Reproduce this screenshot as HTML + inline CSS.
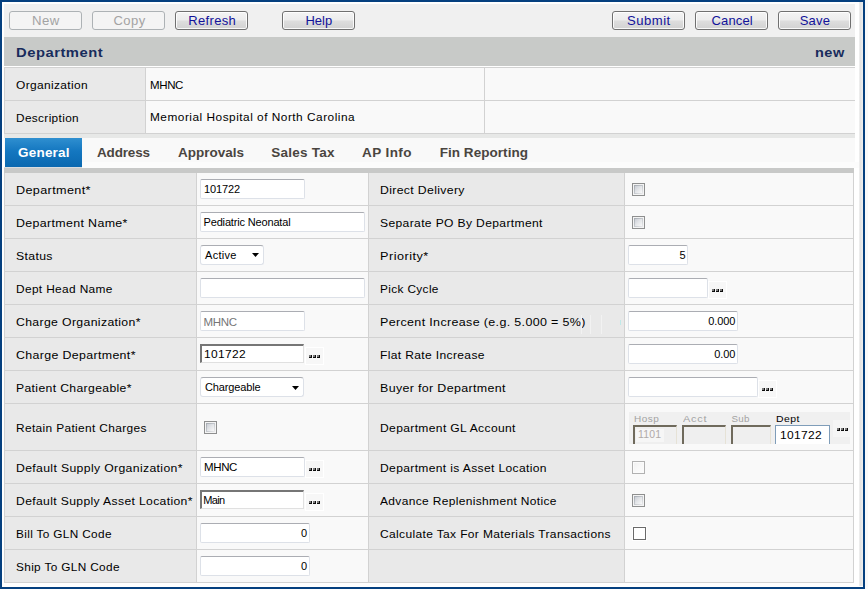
<!DOCTYPE html>
<html><head><meta charset="utf-8"><title>Department</title><style>
html,body{margin:0;padding:0;}
body{width:868px;height:589px;background:#fafafa;position:relative;overflow:hidden;font-family:"Liberation Sans",sans-serif;}
div,span,svg{position:absolute;box-sizing:border-box;}
.t{white-space:pre;}
#frame{left:0;top:0;width:865px;height:589px;border:2px solid #05407f;background:#fff;}
.btn{border:1px solid #707070;border-radius:3px;background:linear-gradient(180deg,#f4f4f4 0%,#ececec 48%,#dedede 52%,#d2d2d2 100%);box-shadow:inset 0 0 0 1px rgba(255,255,255,.85);}
.btn.dis{border-color:#adb2b5;background:#f4f4f4;box-shadow:none;}
.in7{background:#fff;border:1px solid #dde1e8;border-top-color:#abadb3;border-radius:2px;}
.sel{background:#fff;border:1px solid #dde1e8;border-top-color:#abadb3;border-radius:3px;}
.inset{background:#fff;border:1px solid #e0e0e0;border-top:2px solid #767676;border-left:2px solid #767676;}
.gin{background:#efefef;border-top:2px solid #6f6a5c;border-left:2px solid #6f6a5c;border-right:1px solid #e6e2d6;}
.gdept{background:#fff;border:1px solid #7f9db9;border-bottom:none;}
.cb{width:13px;height:13px;border:1px solid #8e8f8f;background:#f4f4f4;}
.cbn::before{content:"";position:absolute;left:1px;top:1px;width:9px;height:9px;background:linear-gradient(135deg,#a4a9b0 0%,#c4c8cd 50%,#ececee 100%);}
.cbn::after{content:"";position:absolute;left:2px;top:2px;width:7px;height:7px;background:linear-gradient(135deg,#cbcfd6 0%,#e4e6e9 50%,#f8f8f8 100%);}
.cbd{border-color:#b1b1b1;background:linear-gradient(135deg,#efefef 0%,#f8f8f8 50%,#fcfcfc 100%);box-shadow:inset 0 0 0 1px #fbfbfb;}
.cbp{border:1px solid #6a6a6a;background:#fff;box-shadow:0 0 0 1px rgba(255,255,255,.8);}
</style></head><body>
<div id="frame"></div>
<div class="" style="left:859px;top:2px;width:4px;height:584px;background:linear-gradient(90deg,#f2f2f2 0%,#e3e3e3 35%,#efefef 100%);"></div>
<div class="" style="left:4px;top:4px;width:851px;height:33px;background:#f0f0f0;"></div>
<div class="" style="left:4px;top:37px;width:851px;height:29px;background:#c8cac8;"></div>
<div class="btn dis" style="left:9px;top:11px;width:73px;height:19px;"></div>
<span class="t" style="left:32.00px;top:14.00px;font-size:13px;line-height:13px;letter-spacing:0.495px;color:#a3a3a3;transform:scaleX(1.014);transform-origin:0 0;">New</span>
<div class="btn dis" style="left:92px;top:11px;width:73px;height:19px;"></div>
<span class="t" style="left:113.40px;top:14.00px;font-size:13px;line-height:13px;letter-spacing:0.470px;color:#a3a3a3;">Copy</span>
<div class="btn" style="left:175px;top:11px;width:73px;height:19px;"></div>
<span class="t" style="left:188.30px;top:14.00px;font-size:13px;line-height:13px;letter-spacing:0.333px;color:#12129a;">Refresh</span>
<div class="btn" style="left:282px;top:11px;width:73px;height:19px;"></div>
<span class="t" style="left:305.40px;top:14.00px;font-size:13px;line-height:13px;letter-spacing:0.040px;color:#12129a;">Help</span>
<div class="btn" style="left:612px;top:11px;width:73px;height:19px;"></div>
<span class="t" style="left:627.20px;top:14.00px;font-size:13px;line-height:13px;letter-spacing:0.494px;color:#12129a;transform:scaleX(1.007);transform-origin:0 0;">Submit</span>
<div class="btn" style="left:695px;top:11px;width:73px;height:19px;"></div>
<span class="t" style="left:711.50px;top:14.00px;font-size:13px;line-height:13px;letter-spacing:0.154px;color:#12129a;">Cancel</span>
<div class="btn" style="left:778px;top:11px;width:73px;height:19px;"></div>
<span class="t" style="left:799.70px;top:14.00px;font-size:13px;line-height:13px;letter-spacing:0.220px;color:#12129a;">Save</span>
<span class="t" style="left:16.30px;top:46.07px;font-size:13.5px;line-height:13.5px;letter-spacing:0.458px;color:#182c5c;font-weight:bold;transform:scaleX(1.095);transform-origin:0 0;">Department</span>
<span class="t" style="left:814.60px;top:46.07px;font-size:13.5px;line-height:13.5px;letter-spacing:0.465px;color:#182c5c;font-weight:bold;transform:scaleX(1.075);transform-origin:0 0;">new</span>
<div class="" style="left:4px;top:67px;width:851px;height:67px;background:#d2d2d2;"></div>
<div class="" style="left:5px;top:68px;width:140px;height:32px;background:#e9e9e9;"></div>
<div class="" style="left:146px;top:68px;width:338px;height:32px;background:#f9f9f9;"></div>
<div class="" style="left:485px;top:68px;width:370px;height:32px;background:#f9f9f9;"></div>
<span class="t" style="left:16px;top:80.47px;font-size:11.5px;line-height:11.5px;letter-spacing:0.336px;color:#000;transform:scaleX(1.04);transform-origin:0 0;">Organization</span>
<span class="t" style="left:150px;top:80.47px;font-size:11.5px;line-height:11.5px;letter-spacing:-0.374px;color:#000;">MHNC</span>
<div class="" style="left:5px;top:101px;width:140px;height:32px;background:#e9e9e9;"></div>
<div class="" style="left:146px;top:101px;width:338px;height:32px;background:#f9f9f9;"></div>
<div class="" style="left:485px;top:101px;width:370px;height:32px;background:#f9f9f9;"></div>
<span class="t" style="left:16px;top:113.47px;font-size:11.5px;line-height:11.5px;letter-spacing:0.342px;color:#000;transform:scaleX(1.028);transform-origin:0 0;">Description</span>
<span class="t" style="left:149.90px;top:112.47px;font-size:11.5px;line-height:11.5px;letter-spacing:0.485px;color:#000;transform:scaleX(1.03);transform-origin:0 0;">Memorial Hospital of North Carolina</span>
<div class="" style="left:4px;top:134px;width:851px;height:4px;background:#e7e8e7;"></div>
<div class="" style="left:4px;top:138px;width:851px;height:24px;background:#f9f9f9;"></div>
<div class="" style="left:4px;top:162px;width:855px;height:6px;background:#fcfcfc;"></div>
<div class="" style="left:5px;top:138px;width:77px;height:29px;background:linear-gradient(180deg,#2f8fd0 0%,#1477c0 45%,#0a68b0 100%);"></div>
<span class="t" style="left:18.00px;top:145.57px;font-size:13.5px;line-height:13.5px;letter-spacing:0.213px;color:#fff;font-weight:bold;">General</span>
<span class="t" style="left:97.00px;top:145.57px;font-size:13.5px;line-height:13.5px;letter-spacing:-0.167px;color:#4a4540;font-weight:bold;">Address</span>
<span class="t" style="left:178.00px;top:145.57px;font-size:13.5px;line-height:13.5px;letter-spacing:-0.002px;color:#4a4540;font-weight:bold;">Approvals</span>
<span class="t" style="left:271.30px;top:145.57px;font-size:13.5px;line-height:13.5px;letter-spacing:0.239px;color:#4a4540;font-weight:bold;">Sales Tax</span>
<span class="t" style="left:362.00px;top:145.57px;font-size:13.5px;line-height:13.5px;letter-spacing:0.420px;color:#4a4540;font-weight:bold;">AP Info</span>
<span class="t" style="left:439.70px;top:145.57px;font-size:13.5px;line-height:13.5px;letter-spacing:0.046px;color:#4a4540;font-weight:bold;">Fin Reporting</span>
<div class="" style="left:4px;top:167px;width:78px;height:1px;background:#d9dde0;"></div>
<div class="" style="left:4px;top:168px;width:850px;height:415px;background:#d2d2d2;"></div>
<div class="" style="left:4px;top:168px;width:850px;height:5px;background:#c8c9c8;"></div>
<div class="" style="left:5px;top:173px;width:191px;height:32px;background:#e9e9e9;"></div>
<div class="" style="left:197px;top:173px;width:171px;height:32px;background:#f9f9f9;"></div>
<div class="" style="left:369px;top:173px;width:255px;height:32px;background:#e9e9e9;"></div>
<div class="" style="left:625px;top:173px;width:228px;height:32px;background:#f9f9f9;"></div>
<span class="t" style="left:16px;top:185.47px;font-size:11.5px;line-height:11.5px;letter-spacing:0.319px;color:#000;transform:scaleX(1.099);transform-origin:0 0;">Department*</span>
<span class="t" style="left:380px;top:185.47px;font-size:11.5px;line-height:11.5px;letter-spacing:0.329px;color:#000;transform:scaleX(1.064);transform-origin:0 0;">Direct Delivery</span>
<div class="" style="left:5px;top:206px;width:191px;height:32px;background:#e9e9e9;"></div>
<div class="" style="left:197px;top:206px;width:171px;height:32px;background:#f9f9f9;"></div>
<div class="" style="left:369px;top:206px;width:255px;height:32px;background:#e9e9e9;"></div>
<div class="" style="left:625px;top:206px;width:228px;height:32px;background:#f9f9f9;"></div>
<span class="t" style="left:16px;top:218.47px;font-size:11.5px;line-height:11.5px;letter-spacing:0.324px;color:#000;transform:scaleX(1.079);transform-origin:0 0;">Department Name*</span>
<span class="t" style="left:380px;top:218.47px;font-size:11.5px;line-height:11.5px;letter-spacing:0.335px;color:#000;transform:scaleX(1.052);transform-origin:0 0;">Separate PO By Department</span>
<div class="" style="left:5px;top:239px;width:191px;height:32px;background:#e9e9e9;"></div>
<div class="" style="left:197px;top:239px;width:171px;height:32px;background:#f9f9f9;"></div>
<div class="" style="left:369px;top:239px;width:255px;height:32px;background:#e9e9e9;"></div>
<div class="" style="left:625px;top:239px;width:228px;height:32px;background:#f9f9f9;"></div>
<span class="t" style="left:16px;top:251.47px;font-size:11.5px;line-height:11.5px;letter-spacing:0.331px;color:#000;transform:scaleX(1.064);transform-origin:0 0;">Status</span>
<span class="t" style="left:380px;top:251.47px;font-size:11.5px;line-height:11.5px;letter-spacing:0.456px;color:#000;transform:scaleX(1.1);transform-origin:0 0;">Priority*</span>
<div class="" style="left:5px;top:272px;width:191px;height:32px;background:#e9e9e9;"></div>
<div class="" style="left:197px;top:272px;width:171px;height:32px;background:#f9f9f9;"></div>
<div class="" style="left:369px;top:272px;width:255px;height:32px;background:#e9e9e9;"></div>
<div class="" style="left:625px;top:272px;width:228px;height:32px;background:#f9f9f9;"></div>
<span class="t" style="left:16px;top:284.47px;font-size:11.5px;line-height:11.5px;letter-spacing:0.341px;color:#000;transform:scaleX(1.034);transform-origin:0 0;">Dept Head Name</span>
<span class="t" style="left:380px;top:284.47px;font-size:11.5px;line-height:11.5px;letter-spacing:0.341px;color:#000;transform:scaleX(1.03);transform-origin:0 0;">Pick Cycle</span>
<div class="" style="left:5px;top:305px;width:191px;height:32px;background:#e9e9e9;"></div>
<div class="" style="left:197px;top:305px;width:171px;height:32px;background:#f9f9f9;"></div>
<div class="" style="left:369px;top:305px;width:255px;height:32px;background:#e9e9e9;"></div>
<div class="" style="left:625px;top:305px;width:228px;height:32px;background:#f9f9f9;"></div>
<span class="t" style="left:16px;top:317.47px;font-size:11.5px;line-height:11.5px;letter-spacing:0.330px;color:#000;transform:scaleX(1.065);transform-origin:0 0;">Charge Organization*</span>
<span class="t" style="left:380px;top:317.47px;font-size:11.5px;line-height:11.5px;letter-spacing:0.324px;color:#000;transform:scaleX(1.085);transform-origin:0 0;">Percent Increase (e.g. 5.000 = 5%)</span>
<div class="" style="left:5px;top:338px;width:191px;height:32px;background:#e9e9e9;"></div>
<div class="" style="left:197px;top:338px;width:171px;height:32px;background:#f9f9f9;"></div>
<div class="" style="left:369px;top:338px;width:255px;height:32px;background:#e9e9e9;"></div>
<div class="" style="left:625px;top:338px;width:228px;height:32px;background:#f9f9f9;"></div>
<span class="t" style="left:16px;top:350.47px;font-size:11.5px;line-height:11.5px;letter-spacing:0.326px;color:#000;transform:scaleX(1.076);transform-origin:0 0;">Charge Department*</span>
<span class="t" style="left:380px;top:350.47px;font-size:11.5px;line-height:11.5px;letter-spacing:0.336px;color:#000;transform:scaleX(1.048);transform-origin:0 0;">Flat Rate Increase</span>
<div class="" style="left:5px;top:371px;width:191px;height:32px;background:#e9e9e9;"></div>
<div class="" style="left:197px;top:371px;width:171px;height:32px;background:#f9f9f9;"></div>
<div class="" style="left:369px;top:371px;width:255px;height:32px;background:#e9e9e9;"></div>
<div class="" style="left:625px;top:371px;width:228px;height:32px;background:#f9f9f9;"></div>
<span class="t" style="left:16px;top:383.47px;font-size:11.5px;line-height:11.5px;letter-spacing:0.333px;color:#000;transform:scaleX(1.06);transform-origin:0 0;">Patient Chargeable*</span>
<span class="t" style="left:380px;top:383.47px;font-size:11.5px;line-height:11.5px;letter-spacing:0.322px;color:#000;transform:scaleX(1.081);transform-origin:0 0;">Buyer for Department</span>
<div class="" style="left:5px;top:404px;width:191px;height:46px;background:#e9e9e9;"></div>
<div class="" style="left:197px;top:404px;width:171px;height:46px;background:#f9f9f9;"></div>
<div class="" style="left:369px;top:404px;width:255px;height:46px;background:#e9e9e9;"></div>
<div class="" style="left:625px;top:404px;width:228px;height:46px;background:#f9f9f9;"></div>
<span class="t" style="left:16px;top:423.47px;font-size:11.5px;line-height:11.5px;letter-spacing:0.340px;color:#000;transform:scaleX(1.035);transform-origin:0 0;">Retain Patient Charges</span>
<span class="t" style="left:380px;top:423.47px;font-size:11.5px;line-height:11.5px;letter-spacing:0.335px;color:#000;transform:scaleX(1.05);transform-origin:0 0;">Department GL Account</span>
<div class="" style="left:5px;top:451px;width:191px;height:32px;background:#e9e9e9;"></div>
<div class="" style="left:197px;top:451px;width:171px;height:32px;background:#f9f9f9;"></div>
<div class="" style="left:369px;top:451px;width:255px;height:32px;background:#e9e9e9;"></div>
<div class="" style="left:625px;top:451px;width:228px;height:32px;background:#f9f9f9;"></div>
<span class="t" style="left:16px;top:463.47px;font-size:11.5px;line-height:11.5px;letter-spacing:0.330px;color:#000;transform:scaleX(1.063);transform-origin:0 0;">Default Supply Organization*</span>
<span class="t" style="left:380px;top:463.47px;font-size:11.5px;line-height:11.5px;letter-spacing:0.332px;color:#000;transform:scaleX(1.05);transform-origin:0 0;">Department is Asset Location</span>
<div class="" style="left:5px;top:484px;width:191px;height:32px;background:#e9e9e9;"></div>
<div class="" style="left:197px;top:484px;width:171px;height:32px;background:#f9f9f9;"></div>
<div class="" style="left:369px;top:484px;width:255px;height:32px;background:#e9e9e9;"></div>
<div class="" style="left:625px;top:484px;width:228px;height:32px;background:#f9f9f9;"></div>
<span class="t" style="left:16px;top:496.47px;font-size:11.5px;line-height:11.5px;letter-spacing:0.334px;color:#000;transform:scaleX(1.057);transform-origin:0 0;">Default Supply Asset Location*</span>
<span class="t" style="left:380px;top:496.47px;font-size:11.5px;line-height:11.5px;letter-spacing:0.336px;color:#000;transform:scaleX(1.041);transform-origin:0 0;">Advance Replenishment Notice</span>
<div class="" style="left:5px;top:517px;width:191px;height:32px;background:#e9e9e9;"></div>
<div class="" style="left:197px;top:517px;width:171px;height:32px;background:#f9f9f9;"></div>
<div class="" style="left:369px;top:517px;width:255px;height:32px;background:#e9e9e9;"></div>
<div class="" style="left:625px;top:517px;width:228px;height:32px;background:#f9f9f9;"></div>
<span class="t" style="left:16px;top:529.47px;font-size:11.5px;line-height:11.5px;letter-spacing:0.342px;color:#000;transform:scaleX(1.025);transform-origin:0 0;">Bill To GLN Code</span>
<span class="t" style="left:380px;top:529.47px;font-size:11.5px;line-height:11.5px;letter-spacing:0.334px;color:#000;transform:scaleX(1.045);transform-origin:0 0;">Calculate Tax For Materials Transactions</span>
<div class="" style="left:5px;top:550px;width:191px;height:32px;background:#e9e9e9;"></div>
<div class="" style="left:197px;top:550px;width:171px;height:32px;background:#f9f9f9;"></div>
<div class="" style="left:369px;top:550px;width:255px;height:32px;background:#e9e9e9;"></div>
<div class="" style="left:625px;top:550px;width:228px;height:32px;background:#f9f9f9;"></div>
<span class="t" style="left:16px;top:562.47px;font-size:11.5px;line-height:11.5px;letter-spacing:0.344px;color:#000;transform:scaleX(1.026);transform-origin:0 0;">Ship To GLN Code</span>
<div class="in7" style="left:200px;top:179px;width:105px;height:20px;"></div>
<span class="t" style="left:204px;top:183.69px;font-size:11px;line-height:11px;letter-spacing:-0.117px;color:#000;">101722</span>
<div class="in7" style="left:200px;top:212px;width:165px;height:20px;"></div>
<span class="t" style="left:203.5px;top:216.69px;font-size:11px;line-height:11px;letter-spacing:-0.160px;color:#000;">Pediatric Neonatal</span>
<div class="sel" style="left:200px;top:245px;width:64px;height:20px;"></div>
<span class="t" style="left:205px;top:249.69px;font-size:11px;line-height:11px;letter-spacing:0.300px;color:#000;">Active</span>
<svg class="t" style="left:252px;top:253px" width="7" height="4" viewBox="0 0 7 4"><path d="M0 0h7L3.5 4z" fill="#000"/></svg>
<div class="in7" style="left:200px;top:278px;width:165px;height:20px;"></div>
<div class="in7" style="left:200px;top:311px;width:105px;height:20px;"></div>
<span class="t" style="left:203.6px;top:317.47px;font-size:11.5px;line-height:11.5px;letter-spacing:-0.374px;color:#767676;">MHNC</span>
<div class="inset" style="left:200px;top:344px;width:104px;height:19px;"></div>
<span class="t" style="left:204px;top:349.47px;font-size:11.5px;line-height:11.5px;letter-spacing:0.336px;color:#000;transform:scaleX(1.04);transform-origin:0 0;">101722</span>
<div class="" style="left:305px;top:347px;width:19px;height:18px;background:#f7f7f7;border:1px solid #fff;"></div>
<div class="" style="left:309px;top:355px;width:3px;height:3px;background:#0c0c0c;"></div>
<div class="" style="left:309px;top:355px;width:2px;height:2px;background:#7a7a7a;"></div>
<div class="" style="left:313px;top:355px;width:3px;height:3px;background:#0c0c0c;"></div>
<div class="" style="left:313px;top:355px;width:2px;height:2px;background:#7a7a7a;"></div>
<div class="" style="left:317px;top:355px;width:3px;height:3px;background:#0c0c0c;"></div>
<div class="" style="left:317px;top:355px;width:2px;height:2px;background:#7a7a7a;"></div>
<div class="sel" style="left:200px;top:377px;width:104px;height:20px;"></div>
<span class="t" style="left:205px;top:381.69px;font-size:11px;line-height:11px;letter-spacing:-0.137px;color:#000;">Chargeable</span>
<svg class="t" style="left:292px;top:386px" width="7" height="4" viewBox="0 0 7 4"><path d="M0 0h7L3.5 4z" fill="#000"/></svg>
<div class="cb cbn" style="left:204px;top:421px;"></div>
<div class="in7" style="left:200px;top:457px;width:105px;height:20px;"></div>
<span class="t" style="left:204px;top:462.47px;font-size:11.5px;line-height:11.5px;letter-spacing:-0.374px;color:#000;">MHNC</span>
<div class="" style="left:305px;top:460px;width:19px;height:18px;background:#f7f7f7;border:1px solid #fff;"></div>
<div class="" style="left:309px;top:468px;width:3px;height:3px;background:#0c0c0c;"></div>
<div class="" style="left:309px;top:468px;width:2px;height:2px;background:#7a7a7a;"></div>
<div class="" style="left:313px;top:468px;width:3px;height:3px;background:#0c0c0c;"></div>
<div class="" style="left:313px;top:468px;width:2px;height:2px;background:#7a7a7a;"></div>
<div class="" style="left:317px;top:468px;width:3px;height:3px;background:#0c0c0c;"></div>
<div class="" style="left:317px;top:468px;width:2px;height:2px;background:#7a7a7a;"></div>
<div class="inset" style="left:200px;top:490px;width:104px;height:19px;"></div>
<span class="t" style="left:203.2px;top:494.69px;font-size:11px;line-height:11px;letter-spacing:-0.635px;color:#000;">Main</span>
<div class="" style="left:305px;top:493px;width:19px;height:18px;background:#f7f7f7;border:1px solid #fff;"></div>
<div class="" style="left:309px;top:501px;width:3px;height:3px;background:#0c0c0c;"></div>
<div class="" style="left:309px;top:501px;width:2px;height:2px;background:#7a7a7a;"></div>
<div class="" style="left:313px;top:501px;width:3px;height:3px;background:#0c0c0c;"></div>
<div class="" style="left:313px;top:501px;width:2px;height:2px;background:#7a7a7a;"></div>
<div class="" style="left:317px;top:501px;width:3px;height:3px;background:#0c0c0c;"></div>
<div class="" style="left:317px;top:501px;width:2px;height:2px;background:#7a7a7a;"></div>
<div class="in7" style="left:200px;top:523px;width:110px;height:20px;"></div>
<span class="t" style="left:300.88px;top:527.69px;font-size:11px;line-height:11px;letter-spacing:0.000px;color:#000;">0</span>
<div class="in7" style="left:200px;top:556px;width:110px;height:20px;"></div>
<span class="t" style="left:300.88px;top:560.69px;font-size:11px;line-height:11px;letter-spacing:0.000px;color:#000;">0</span>
<div class="" style="left:581px;top:315px;width:1px;height:19px;background:#f2f2f2;"></div>
<div class="" style="left:590px;top:315px;width:1px;height:19px;background:#f2f2f2;"></div>
<div class="" style="left:601px;top:315px;width:1px;height:19px;background:#f2f2f2;"></div>
<div class="" style="left:620px;top:320px;width:1px;height:5px;background:#bfe9e9;"></div>
<div class="cb cbn" style="left:632px;top:183px;"></div>
<div class="cb cbn" style="left:632px;top:216px;"></div>
<div class="in7" style="left:628px;top:245px;width:60px;height:20px;"></div>
<span class="t" style="left:679.38px;top:249.69px;font-size:11px;line-height:11px;letter-spacing:0.000px;color:#000;">5</span>
<div class="in7" style="left:628px;top:278px;width:80px;height:20px;"></div>
<div class="" style="left:708px;top:281px;width:19px;height:18px;background:#f7f7f7;border:1px solid #fff;"></div>
<div class="" style="left:712px;top:289px;width:3px;height:3px;background:#0c0c0c;"></div>
<div class="" style="left:712px;top:289px;width:2px;height:2px;background:#7a7a7a;"></div>
<div class="" style="left:716px;top:289px;width:3px;height:3px;background:#0c0c0c;"></div>
<div class="" style="left:716px;top:289px;width:2px;height:2px;background:#7a7a7a;"></div>
<div class="" style="left:720px;top:289px;width:3px;height:3px;background:#0c0c0c;"></div>
<div class="" style="left:720px;top:289px;width:2px;height:2px;background:#7a7a7a;"></div>
<div class="in7" style="left:628px;top:311px;width:110px;height:20px;"></div>
<span class="t" style="left:708.30px;top:315.69px;font-size:11px;line-height:11px;letter-spacing:-0.105px;color:#000;">0.000</span>
<div class="in7" style="left:628px;top:344px;width:110px;height:20px;"></div>
<span class="t" style="left:714.30px;top:348.69px;font-size:11px;line-height:11px;letter-spacing:-0.102px;color:#000;">0.00</span>
<div class="in7" style="left:628px;top:377px;width:130px;height:20px;"></div>
<div class="" style="left:758px;top:380px;width:19px;height:18px;background:#f7f7f7;border:1px solid #fff;"></div>
<div class="" style="left:762px;top:388px;width:3px;height:3px;background:#0c0c0c;"></div>
<div class="" style="left:762px;top:388px;width:2px;height:2px;background:#7a7a7a;"></div>
<div class="" style="left:766px;top:388px;width:3px;height:3px;background:#0c0c0c;"></div>
<div class="" style="left:766px;top:388px;width:2px;height:2px;background:#7a7a7a;"></div>
<div class="" style="left:770px;top:388px;width:3px;height:3px;background:#0c0c0c;"></div>
<div class="" style="left:770px;top:388px;width:2px;height:2px;background:#7a7a7a;"></div>
<div class="gl" style="left:629px;top:412px;width:221px;height:32px;background:#f0f0f0;overflow:hidden;"></div>
<span class="t" style="left:633.60px;top:413.90px;font-size:9.8px;line-height:9.8px;letter-spacing:0.493px;color:#a3a3a3;transform:scaleX(1.02);transform-origin:0 0;">Hosp</span>
<span class="t" style="left:682.50px;top:413.90px;font-size:9.8px;line-height:9.8px;letter-spacing:0.624px;color:#a3a3a3;transform:scaleX(1.12);transform-origin:0 0;">Acct</span>
<span class="t" style="left:731.50px;top:413.90px;font-size:9.8px;line-height:9.8px;letter-spacing:0.228px;color:#a3a3a3;">Sub</span>
<span class="t" style="left:775.70px;top:413.90px;font-size:9.8px;line-height:9.8px;letter-spacing:0.469px;color:#000;transform:scaleX(1.064);transform-origin:0 0;">Dept</span>
<div class="gin" style="left:633px;top:425px;width:44px;height:19px;"></div>
<div class="gin" style="left:682px;top:425px;width:44px;height:19px;"></div>
<div class="gin" style="left:731px;top:425px;width:40px;height:19px;"></div>
<div class="" style="left:636px;top:429px;width:28px;height:13px;background:#f6f6f6;"></div>
<span class="t" style="left:638.00px;top:429.31px;font-size:10.5px;line-height:10.5px;letter-spacing:0.142px;color:#b0aaa8;">1101</span>
<div class="gdept" style="left:775px;top:425px;width:55px;height:19px;"></div>
<span class="t" style="left:779.5px;top:430.47px;font-size:11.5px;line-height:11.5px;letter-spacing:0.336px;color:#000;transform:scaleX(1.04);transform-origin:0 0;">101722</span>
<div class="" style="left:833px;top:420px;width:17px;height:17px;background:#f5f5f5;"></div>
<div class="" style="left:837px;top:428px;width:3px;height:3px;background:#0c0c0c;"></div>
<div class="" style="left:837px;top:428px;width:2px;height:2px;background:#7a7a7a;"></div>
<div class="" style="left:841px;top:428px;width:3px;height:3px;background:#0c0c0c;"></div>
<div class="" style="left:841px;top:428px;width:2px;height:2px;background:#7a7a7a;"></div>
<div class="" style="left:845px;top:428px;width:3px;height:3px;background:#0c0c0c;"></div>
<div class="" style="left:845px;top:428px;width:2px;height:2px;background:#7a7a7a;"></div>
<div class="cb cbd" style="left:632px;top:461px;"></div>
<div class="cb cbn" style="left:632px;top:494px;"></div>
<div class="cb cbp" style="left:633px;top:527px;"></div>
</body></html>
